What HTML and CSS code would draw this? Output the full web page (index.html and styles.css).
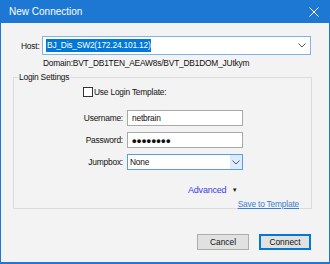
FILE: index.html
```html
<!DOCTYPE html>
<html lang="en">
<head>
    <meta charset="UTF-8">
    <title>New Connection</title>
    <link rel="stylesheet" href="styles.css">
</head>
<body>
    <div class="window">
        <div class="titlebar">
            <span class="title">New Connection</span>
            <svg class="close" width="10" height="10" viewBox="0 0 10 10">
                <path d="M0.5 0.5 L9.5 9.5 M9.5 0.5 L0.5 9.5" stroke="#fff" stroke-width="1" fill="none"/>
            </svg>
        </div>
        <div class="content">
            <div class="host-row">
                <span class="host-label">Host:</span>
                <div class="combo host-combo">
                    <span class="selected">BJ_Dis_SW2(172.24.101.12)</span>
                    <svg class="chevron" width="8" height="5" viewBox="0 0 8 5">
                        <path d="M0.5 0.5 L4 4 L7.5 0.5" stroke="#555" stroke-width="1" fill="none"/>
                    </svg>
                </div>
            </div>
            <div class="domain">Domain:BVT_DB1TEN_AEAW8s/BVT_DB1DOM_JUtkym</div>

            <fieldset class="group">
                <legend>Login Settings</legend>
                <label class="check-row">
                    <span class="checkbox"></span>
                    <span>Use Login Template:</span>
                </label>
                <div class="form-grid">
                    <span class="label">Username:</span>
                    <div class="field">netbrain</div>
                    <span class="label">Password:</span>
                    <div class="field dots">&bull;&bull;&bull;&bull;&bull;&bull;&bull;&bull;</div>
                    <span class="label">Jumpbox:</span>
                    <div class="field select">
                        <span>None</span>
                        <span class="select-btn">
                            <svg width="8" height="5" viewBox="0 0 8 5">
                                <path d="M0.5 0.5 L4 4 L7.5 0.5" stroke="#555" stroke-width="1" fill="none"/>
                            </svg>
                        </span>
                    </div>
                </div>
                <div class="advanced">Advanced <span class="caret">&#9660;</span></div>
                <div class="save-row"><a href="#" class="save-link">Save to Template</a></div>
            </fieldset>

            <div class="buttons">
                <button class="btn">Cancel</button>
                <button class="btn primary">Connect</button>
            </div>
        </div>
    </div>
</body>
</html>
```

FILE: styles.css
```css
/* New Connection dialog */
body {
    margin: 0;
    font-family: "Liberation Sans", Arial, sans-serif;
    font-size: 8.4px;
    letter-spacing: -0.2px;
    color: #111;
}
.window {
    width: 330px;
    height: 264px;
    box-sizing: border-box;
    border: 1px solid #1c78d2;
    border-top: none;
    border-bottom-width: 2px;
    background-color: #f3f3f3;
    display: flex;
    flex-direction: column;
}
.titlebar {
    height: 23px;
    margin: 0 -1px;
    background-color: #1c78d2;
    color: #fff;
    display: flex;
    align-items: center;
    justify-content: space-between;
    padding: 0 11px 0 9px;
}
.title {
    font-size: 10px;
    letter-spacing: 0;
}
.content {
    flex: 1;
    padding-top: 13px;
    display: flex;
    flex-direction: column;
}
.host-row {
    display: flex;
    align-items: center;
    padding-left: 20px;
}
.host-label {
    width: 21px;
}
.combo {
    box-sizing: border-box;
    background-color: #fff;
    border: 1px solid #7eb4ea;
    display: flex;
    align-items: center;
    justify-content: space-between;
}
.host-combo {
    width: 269px;
    height: 19px;
    padding: 0 4px 0 3px;
}
.selected {
    background-color: #0078d7;
    color: #fff;
    padding: 1px 1px;
    line-height: 11px;
}
.domain {
    margin: 3px 0 0 42px;
    line-height: 11px;
}
.group {
    margin: 3px 0 0 12px;
    width: 299px;
    height: 137px;
    flex-shrink: 0;
    box-sizing: border-box;
    border: 1px solid #dcdcdc;
    padding: 0;
}
.group legend {
    padding: 0 1px;
    margin-left: 4px;
    line-height: 11px;
}
.check-row {
    display: flex;
    align-items: center;
    margin: 4px 0 0 69px;
    gap: 1px;
}
.checkbox {
    width: 8px;
    height: 8px;
    border: 1px solid #333;
    background-color: #fff;
}
.form-grid {
    display: grid;
    grid-template-columns: 109px 116px;
    column-gap: 4px;
    row-gap: 6px;
    align-items: center;
    margin-top: 13px;
}
.label {
    text-align: right;
}
.field {
    box-sizing: border-box;
    height: 16px;
    background-color: #fff;
    border: 1px solid #a9a9a9;
    padding-left: 4px;
    display: flex;
    align-items: center;
}
.dots {
    font-size: 13px;
    font-weight: bold;
    letter-spacing: 0.3px;
}
.select {
    border-color: #569de5;
    justify-content: space-between;
    padding-left: 2px;
    padding-right: 0;
}
.select-btn {
    width: 12px;
    height: 14px;
    background-color: #dcecfc;
    display: flex;
    align-items: center;
    justify-content: center;
}
.advanced {
    margin: 15px 0 0 174px;
    color: #3c3cf0;
    font-size: 9px;
}
.caret {
    color: #222;
    font-size: 6px;
    margin-left: 3px;
    vertical-align: 1px;
}
.save-row {
    text-align: right;
    padding-right: 12px;
    margin-top: 4px;
}
.save-link {
    color: #3b7fd3;
    text-decoration: underline;
}
.buttons {
    display: flex;
    justify-content: flex-end;
    gap: 10px;
    margin-top: 25px;
    padding-right: 18px;
}
.btn {
    width: 52px;
    height: 16px;
    box-sizing: border-box;
    font-family: inherit;
    font-size: 8.4px;
    color: #111;
    background-color: #e1e1e1;
    border: 1px solid #adadad;
    padding: 0;
}
.btn.primary {
    border: 2px solid #0078d7;
}
```
